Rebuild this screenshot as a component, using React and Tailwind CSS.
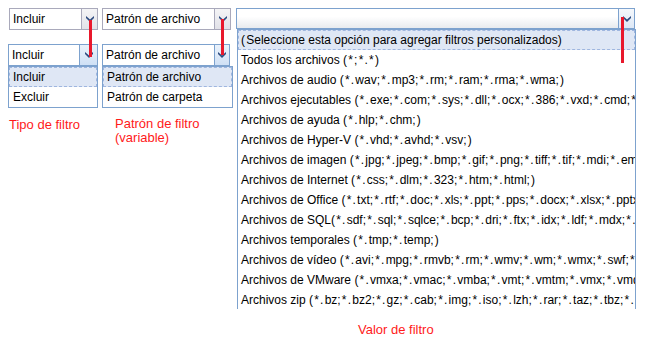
const font = { fontFamily: '"Liberation Sans", Arial, sans-serif' };

const files = [
  '(Seleccione esta opción para agregar filtros personalizados)',
  'Todos los archivos (*;*.*)',
  'Archivos de audio (*.wav;*.mp3;*.rm;*.ram;*.rma;*.wma;)',
  'Archivos ejecutables (*.exe;*.com;*.sys;*.dll;*.ocx;*.386;*.vxd;*.cmd;*.bat;*.scr)',
  'Archivos de ayuda (*.hlp;*.chm;)',
  'Archivos de Hyper-V (*.vhd;*.avhd;*.vsv;)',
  'Archivos de imagen (*.jpg;*.jpeg;*.bmp;*.gif;*.png;*.tiff;*.tif;*.mdi;*.emf;*.wmf)',
  'Archivos de Internet (*.css;*.dlm;*.323;*.htm;*.html;)',
  'Archivos de Office (*.txt;*.rtf;*.doc;*.xls;*.ppt;*.pps;*.docx;*.xlsx;*.pptx)',
  'Archivos de SQL(*.sdf;*.sql;*.sqlce;*.bcp;*.dri;*.ftx;*.idx;*.ldf;*.mdx;*.mdf)',
  'Archivos temporales (*.tmp;*.temp;)',
  'Archivos de vídeo (*.avi;*.mpg;*.rmvb;*.rm;*.wmv;*.wm;*.wmx;*.swf;*.flv)',
  'Archivos de VMware (*.vmxa;*.vmac;*.vmba;*.vmt;*.vmtm;*.vmx;*.vmdk)',
  'Archivos zip (*.bz;*.bz2;*.gz;*.cab;*.img;*.iso;*.lzh;*.rar;*.taz;*.tbz;*.tgz)',
];

// the original font draws * ; . ( ) a bit wider than Arial does
function spaced(text) {
  return text.split(/([*;.()]+)/).map((part, i) =>
    /^[*;.()]+$/.test(part) ? (
      <span key={i} className="tracking-[1.2px]">
        {part}
      </span>
    ) : (
      part
    )
  );
}

function Arrow() {
  return (
    <svg width="8" height="6" viewBox="0 0 8 6">
      <path d="M0 0 L4 3.5 L8 0 L8 2 L4 6 L0 2 Z" fill="#2d4b7f" />
    </svg>
  );
}

function Combo({ text, active, width, btn = 'w-4' }) {
  return (
    <div className={`flex h-[22px] border bg-white ${active ? 'border-[#7da2ce]' : 'border-[#a9a9bb]'} ${width}`}>
      <div className="flex-1 pl-[3px] text-[12px] leading-[20px] whitespace-nowrap overflow-hidden">{text}</div>
      <div
        className={`${btn} flex items-center justify-center border-l ${
          active ? 'border-[#7da2ce] bg-gradient-to-b from-[#eaf2fb] to-[#cfe0f5]' : 'border-[#a9a9bb] bg-gradient-to-b from-[#f4f4f6] to-[#e2e2e8]'
        }`}
      >
        <Arrow />
      </div>
    </div>
  );
}

function Item({ text, selected, pad = 'pl-[3px]' }) {
  return (
    <div
      className={`h-5 ${pad} text-[12px] leading-[18px] whitespace-nowrap border ${
        selected ? 'bg-[#dfe7f5] border-dashed border-[#9fb6df]' : 'border-transparent'
      }`}
    >
      {text}
    </div>
  );
}

function Label({ children, className = '' }) {
  return <div className={`text-[13px] leading-[14px] text-[#ff1a1a] ${className}`}>{children}</div>;
}

export default function App() {
  return (
    <div className="relative w-[648px] h-[347px] bg-white overflow-hidden text-black" style={font}>
      <div className="flex items-start pt-2 pl-2">
        <div className="w-[90px] flex flex-col">
          <div className="ml-px">
            <Combo text="Incluir" width="w-[89px]" />
          </div>
          <div className="mt-[14px]">
            <Combo text="Incluir" active width="w-[90px]" btn="w-[18px]" />
          </div>
          <div className="border border-[#7da2ce] bg-white">
            <Item text="Incluir" selected />
            <Item text="Excluir" />
          </div>
          <Label className="mt-[10px] pl-px">Tipo de filtro</Label>
        </div>

        <div className="ml-1 w-[131px] flex flex-col">
          <Combo text="Patrón de archivo" width="w-[129px]" />
          <div className="mt-[14px]">
            <Combo text="Patrón de archivo" active width="w-[128px]" btn="w-[15px]" />
          </div>
          <div className="border border-[#7da2ce] bg-white w-[131px]">
            <Item text="Patrón de archivo" selected />
            <Item text="Patrón de carpeta" />
          </div>
          <Label className="mt-[9px] pl-[13px]">
            Patrón de filtro
            <br />
            (variable)
          </Label>
        </div>

        <div className="ml-[3px] w-[400px] flex flex-col">
          <div className="flex h-[21px] w-[399px] border border-[#7da2ce] bg-gradient-to-b from-white from-40% to-[#e8ebee]">
            <div className="flex-1" />
            <div className="w-4 flex items-center justify-center border-l border-[#7da2ce] bg-gradient-to-b from-[#f5f8fc] to-[#dde8f6]">
              <Arrow />
            </div>
          </div>
          <div className="ml-px w-[399px] h-[280px] overflow-hidden border-x border-t border-[#7da2ce] bg-white">
            {files.map((f, i) => (
              <Item key={i} text={spaced(f)} selected={i === 0} pad="pl-[2px]" />
            ))}
          </div>
          <Label className="mt-[14px] ml-[122px]">Valor de filtro</Label>
        </div>
      </div>

      {/* red pointer lines */}
      <div className="absolute left-[89px] top-5 w-[3px] h-[37px] bg-[#e8182c]" />
      <div className="absolute left-[221px] top-[19px] w-[3px] h-[36px] bg-[#e8182c]" />
      <div className="absolute left-[621px] top-[17px] w-[3px] h-[46px] bg-[#e8182c]" />
    </div>
  );
}
